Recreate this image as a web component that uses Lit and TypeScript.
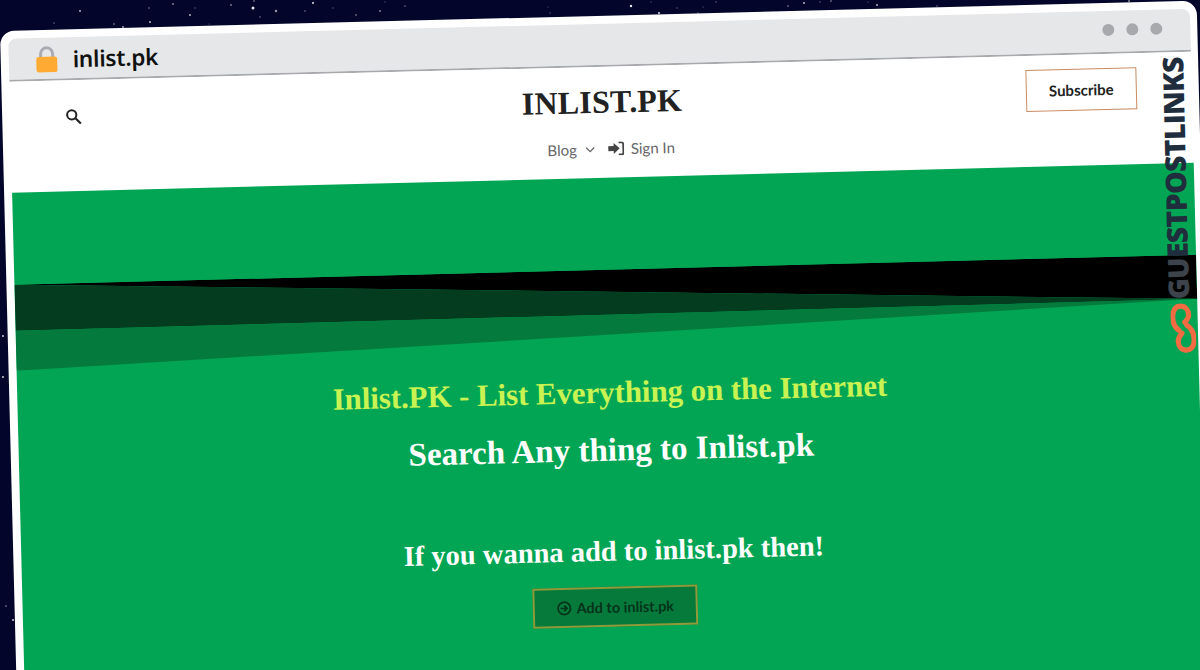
import { LitElement, html, css, svg } from 'lit';
import { customElement } from 'lit/decorators.js';

const STARS: [number, number, number, number][] = [
  [80, 11, 1, 0.7], [149, 8, 0.8, 0.5], [173, 4, 1, 0.5], [195, 8, 0.7, 0.4], [190, 15, 1, 0.7],
  [231, 5, 0.9, 0.5], [253, 8, 1.5, 0.9], [254, 1, 0.8, 0.6], [276, 11, 1.2, 0.6], [313, 3, 1.1, 0.8],
  [305, 11, 0.9, 0.3], [333, 8, 0.8, 0.3], [356, 15, 0.9, 0.4], [380, 11, 1, 0.5], [405, 6, 0.9, 0.3],
  [385, 2, 0.7, 0.3], [54, 23, 0.8, 0.4], [114, 24, 0.9, 0.4], [123, 27, 0.9, 0.7], [150, 22, 0.9, 0.8],
  [260, 17, 0.9, 0.3], [432, 21, 0.8, 0.5], [550, 13, 0.8, 0.3], [548, 7, 0.7, 0.2], [209, 24, 0.7, 0.2],
  [631, 6, 1.2, 0.9], [659, 13, 1.1, 0.8], [636, 16, 0.8, 0.5], [651, 2, 0.7, 0.3], [677, 8, 0.7, 0.4],
  [716, 2, 0.7, 0.4], [703, 7, 0.7, 0.3], [698, 13, 0.7, 0.4], [788, 6, 0.8, 0.6], [804, 3, 1, 0.7],
  [831, 1, 0.8, 0.6], [820, 2, 0.7, 0.4], [877, 5, 1, 0.7], [868, 2, 0.7, 0.3], [937, 6, 0.7, 0.5],
  [1129, 1, 0.9, 0.6], [3, 336, 1, 0.8], [3, 377, 1, 0.8], [6, 606, 0.9, 0.4], [13, 620, 1, 0.8],
];

@customElement('app-root')
export class AppRoot extends LitElement {
  static styles = css`
    :host {
      background: #03062a;
      display: block;
      height: 670px;
      overflow: hidden;
      position: relative;
      width: 1200px;
    }

    .sky {
      height: 670px;
      left: 0;
      position: absolute;
      top: 0;
      width: 1200px;
    }

    /* the browser window sits tilted on the starry desktop */
    .window {
      background: #fff;
      border-radius: 14px 14px 0 0;
      box-sizing: border-box;
      display: flex;
      flex-direction: column;
      height: 720px;
      left: 0;
      padding: 8px 7px 0 8px;
      position: absolute;
      top: 31px;
      transform: rotate(-1.45deg);
      transform-origin: 0 0;
      width: 1197px;
    }

    .bar {
      align-items: center;
      background: #e6e7e9;
      border-bottom: 2px solid #a8aaad;
      border-radius: 8px 8px 0 0;
      box-sizing: border-box;
      display: flex;
      flex: none;
      height: 43px;
      padding: 0 28px 0 27px;
    }

    .lock {
      flex: none;
      height: 27px;
      margin-top: 2px;
      width: 22px;
    }

    .url {
      color: #111;
      font-family: 'Noto Sans', sans-serif;
      font-size: 22.5px;
      font-weight: 600;
      letter-spacing: -0.2px;
      line-height: 1;
      margin-left: 15px;
      margin-top: 3px;
    }

    .dots {
      display: flex;
      gap: 12px;
      margin-left: auto;
      margin-top: -4px;
    }

    .dots i {
      background: #a8a9ad;
      border-radius: 50%;
      display: block;
      height: 12px;
      width: 12px;
    }

    .nav {
      box-sizing: border-box;
      display: flex;
      flex: none;
      flex-direction: column;
      height: 111px;
      padding: 14px 55px 0;
    }

    .top {
      align-items: center;
      display: grid;
      grid-template-columns: 1fr auto 1fr;
      height: 42px;
    }

    .search {
      display: block;
      height: 17px;
      margin-top: 3px;
      width: 17px;
    }

    .title {
      color: #222;
      font-family: 'Liberation Serif', serif;
      font-size: 32px;
      font-weight: 700;
      letter-spacing: 0.2px;
      margin: 1px 0 0 2px;
    }

    .subscribe {
      background: #fff;
      border: 1.5px solid #c98c62;
      box-sizing: border-box;
      color: #222;
      font-family: Lato, sans-serif;
      font-size: 15px;
      font-weight: 700;
      height: 42px;
      justify-self: end;
      width: 111px;
    }

    .links {
      align-items: center;
      color: #666;
      display: flex;
      font-family: Lato, sans-serif;
      font-size: 15px;
      justify-content: center;
      margin-top: 17px;
      padding-left: 18px;
    }

    .chev {
      height: 7px;
      margin-left: 8px;
      width: 10px;
    }

    .signin {
      height: 14px;
      margin-left: 13px;
      margin-right: 7px;
      width: 16px;
    }

    .hero {
      background: #02a553;
      flex: 1;
      padding-left: 3px;
      position: relative;
      text-align: center;
    }

    .slant {
      display: block;
      height: 86px;
      margin-left: -3px;
      margin-top: 92px;
      width: calc(100% + 3px);
    }

    .hero h2 {
      font-family: 'Liberation Serif', serif;
      font-weight: 700;
      margin: 0;
    }

    .hero .lead {
      color: #c9f352;
      font-size: 31px;
      letter-spacing: -0.1px;
      line-height: 36px;
      margin-top: 19px;
    }

    .hero .sub {
      color: #fff;
      font-size: 33px;
      line-height: 40px;
      margin-top: 19px;
    }

    .hero .cta {
      color: #fff;
      font-size: 28.5px;
      line-height: 36px;
      margin-top: 64px;
    }

    .add {
      align-items: center;
      background: #067a3a;
      border: 2px solid #8f9a3a;
      box-sizing: border-box;
      color: #04331a;
      display: inline-flex;
      font-family: Lato, sans-serif;
      font-size: 14.5px;
      font-weight: 700;
      gap: 5px;
      height: 40px;
      justify-content: center;
      margin-top: 17px;
      width: 165px;
    }

    .add svg {
      height: 15px;
      width: 15px;
    }

    /* watermark over the right edge of the window */
    .brand {
      align-items: center;
      display: flex;
      flex-direction: column;
      left: 1156px;
      position: absolute;
      top: 56px;
      width: 30px;
    }

    .brand b {
      color: #1f2d3d;
      font-family: 'Open Sans', sans-serif;
      font-size: 28.5px;
      font-weight: 800;
      letter-spacing: -0.7px;
      line-height: 30px;
      transform: rotate(180deg);
      white-space: nowrap;
      writing-mode: vertical-rl;
    }

    .brand b span {
      color: #3d434b;
    }

    .brand svg {
      height: 50px;
      margin-left: 9px;
      margin-top: 4px;
      width: 25px;
    }
  `;

  render() {
    return html`
      <svg class="sky" viewBox="0 0 1200 670">
        ${STARS.map(([x, y, r, o]) => svg`<circle cx=${x} cy=${y} r=${r} fill="#fff" opacity=${o}></circle>`)}
      </svg>
      <div class="window">
        <div class="bar">
          <svg class="lock" viewBox="0 0 22 27">
            <path d="M5 13V8a6 6 0 0 1 12 0v5" fill="none" stroke="#a9adb3" stroke-width="3"></path>
            <rect x="0.5" y="11" width="21" height="15.5" rx="2.5" fill="#ffaa33"></rect>
          </svg>
          <span class="url">inlist.pk</span>
          <div class="dots"><i></i><i></i><i></i></div>
        </div>
        <div class="nav">
          <div class="top">
            <svg class="search" viewBox="0 0 17 17">
              <circle cx="6.6" cy="6.6" r="4.6" fill="none" stroke="#222" stroke-width="2"></circle>
              <path d="M10.2 10.2L15.5 15.5" stroke="#222" stroke-width="2.2"></path>
            </svg>
            <h1 class="title">INLIST.PK</h1>
            <button class="subscribe">Subscribe</button>
          </div>
          <div class="links">
            <span>Blog</span>
            <svg class="chev" viewBox="0 0 10 7">
              <path d="M1 1.5L5 5.5L9 1.5" fill="none" stroke="#666" stroke-width="1.3"></path>
            </svg>
            <svg class="signin" viewBox="0 0 16 14">
              <path d="M0 4.5h5.5V1.5L11.5 7 5.5 12.5V9.5H0z" fill="#444"></path>
              <path d="M10.5 1H13.5a1.6 1.6 0 0 1 1.6 1.6v8.8a1.6 1.6 0 0 1-1.6 1.6H10.5" fill="none" stroke="#444" stroke-width="1.8"></path>
            </svg>
            <span>Sign In</span>
          </div>
        </div>
        <div class="hero">
          <svg class="slant" viewBox="0 0 1182 86" preserveAspectRatio="none">
            <polygon points="0,0 1182,0 1182,44" fill="#000"></polygon>
            <polygon points="0,0 1182,44 0,46" fill="#033c1f"></polygon>
            <polygon points="0,46 1182,44 0,86" fill="#047a3c"></polygon>
          </svg>
          <h2 class="lead">Inlist.PK - List Everything on the Internet</h2>
          <h2 class="sub">Search Any thing to Inlist.pk</h2>
          <h2 class="cta">If you wanna add to inlist.pk then!</h2>
          <div class="add">
            <svg viewBox="0 0 16 16">
              <circle cx="8" cy="8" r="6.6" fill="none" stroke="#04331a" stroke-width="1.8"></circle>
              <path d="M4 8h6M8 5l3 3-3 3" fill="none" stroke="#04331a" stroke-width="1.8"></path>
            </svg>
            Add to inlist.pk
          </div>
        </div>
        <div class="brand">
          <b><span>GU</span>ESTPOSTLINKS</b>
          <svg viewBox="0 0 25 50">
            <path d="M8 27C4 24 2 20 2 14C2 7 5 3 10 3C15 3 18 7 18 12C18 15 16 17 14 19" fill="none" stroke="#f26b43" stroke-width="5.2" stroke-linecap="round"></path>
            <path d="M16 22C20 25 23 30 23 36C23 43 20 47 15 47C10 47 7 43 7 38C7 34 9 32 11 30" fill="none" stroke="#f26b43" stroke-width="5.2" stroke-linecap="round"></path>
          </svg>
        </div>
      </div>
    `;
  }
}
